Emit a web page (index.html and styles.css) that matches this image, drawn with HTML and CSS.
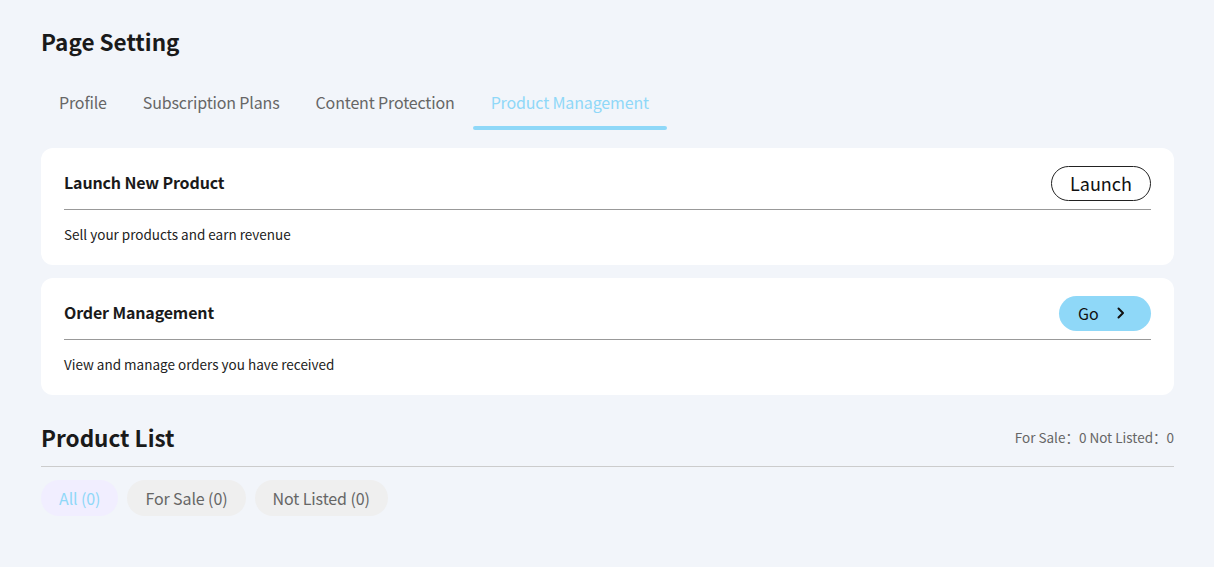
FILE: index.html
```html
<!DOCTYPE html>
<html lang="en">
<head>
    <meta charset="UTF-8">
    <meta name="viewport" content="width=device-width, initial-scale=1.0">
    <title>Page Setting</title>
    <link rel="stylesheet" href="styles.css">
</head>
<body>
    <div class="page">
        <h1 class="page__title">Page Setting</h1>

        <nav class="tabs">
            <a class="tabs__item">Profile</a>
            <a class="tabs__item">Subscription Plans</a>
            <a class="tabs__item">Content Protection</a>
            <a class="tabs__item tabs__item--active">Product Management</a>
        </nav>

        <section class="card">
            <div class="card__head">
                <h2 class="card__title">Launch New Product</h2>
                <button class="btn btn--outline">Launch</button>
            </div>
            <p class="card__desc">Sell your products and earn revenue</p>
        </section>

        <section class="card">
            <div class="card__head">
                <h2 class="card__title">Order Management</h2>
                <button class="btn btn--go">
                    Go
                    <svg class="btn__icon" viewBox="0 0 12 12" width="12" height="12">
                        <path d="M3.5 1.5 L8 6 L3.5 10.5" fill="none" stroke="#111" stroke-width="2" stroke-linecap="round" stroke-linejoin="round"/>
                    </svg>
                </button>
            </div>
            <p class="card__desc">View and manage orders you have received</p>
        </section>

        <div class="list-head">
            <h2 class="list-head__title">Product List</h2>
            <span class="list-head__stats">For Sale：0 Not Listed：0</span>
        </div>

        <div class="chips">
            <button class="chip chip--active">All (0)</button>
            <button class="chip">For Sale (0)</button>
            <button class="chip">Not Listed (0)</button>
        </div>
    </div>
</body>
</html>
```

FILE: styles.css
```css
* {
    box-sizing: border-box;
}

body {
    margin: 0;
    background: #f2f5fa;
    color: #1a1a1a;
    font-family: "Noto Sans CJK SC", "Noto Sans", sans-serif;
}

.page {
    padding: 25px 40px 0 41px;
}

.page__title {
    margin: 0 0 27px;
    font-size: 22.5px;
    line-height: 32px;
    font-weight: 700;
}

.tabs {
    display: flex;
    margin-bottom: 18px;
}

.tabs__item {
    position: relative;
    padding: 6px 18px 16px;
    color: #666;
    font-size: 16px;
    line-height: 24px;
    letter-spacing: -0.15px;
    cursor: pointer;
}

.tabs__item--active {
    color: #8fd8f8;
}

.tabs__item--active:after {
    position: absolute;
    left: 0;
    right: 0;
    bottom: 0;
    height: 4px;
    border-radius: 2px;
    background: #8fd8f8;
    content: '';
}

.card {
    margin-bottom: 13px;
    padding: 18px 23px 0;
    border-radius: 12px;
    background: #fff;
}

.card__head {
    display: flex;
    align-items: center;
    justify-content: space-between;
    padding-bottom: 8px;
    border-bottom: 1px solid #999;
}

.card__title {
    margin: 0;
    padding-bottom: 2px;
    font-size: 16px;
    line-height: 33px;
    font-weight: 700;
    letter-spacing: -0.15px;
}

.card__desc {
    margin: 0;
    padding: 13px 0 20px;
    font-size: 13.5px;
    line-height: 22px;
    color: #222;
}

.btn {
    display: inline-flex;
    align-items: center;
    justify-content: center;
    height: 35px;
    border-radius: 18px;
    font-family: inherit;
    line-height: 1;
    color: #111;
    cursor: pointer;
}

.btn--outline {
    width: 100px;
    padding: 0 0 1px;
    border: 1px solid #222;
    background: #fff;
    font-size: 18px;
}

.btn--go {
    justify-content: flex-start;
    gap: 16px;
    width: 92px;
    padding: 0 0 1px 19px;
    border: 0;
    background: #8fd8f8;
    font-size: 16px;
}

.btn__icon {
    display: block;
}

.list-head {
    display: flex;
    align-items: center;
    justify-content: space-between;
    margin-top: 9px;
    padding: 13px 0 13px;
    border-bottom: 1px solid #ccc;
}

.list-head__title {
    margin: 0;
    font-size: 22.5px;
    line-height: 32px;
    font-weight: 700;
}

.list-head__stats {
    color: #666;
    font-size: 13.5px;
}

.chips {
    display: flex;
    gap: 9px;
    margin-top: 13px;
}

.chip {
    height: 36px;
    padding: 0 18px;
    border: 0;
    border-radius: 18px;
    background: #efefef;
    color: #666;
    font-family: inherit;
    font-size: 16px;
    letter-spacing: -0.1px;
    cursor: pointer;
}

.chip--active {
    background: #f1eeff;
    color: #8fd8f8;
}
```
